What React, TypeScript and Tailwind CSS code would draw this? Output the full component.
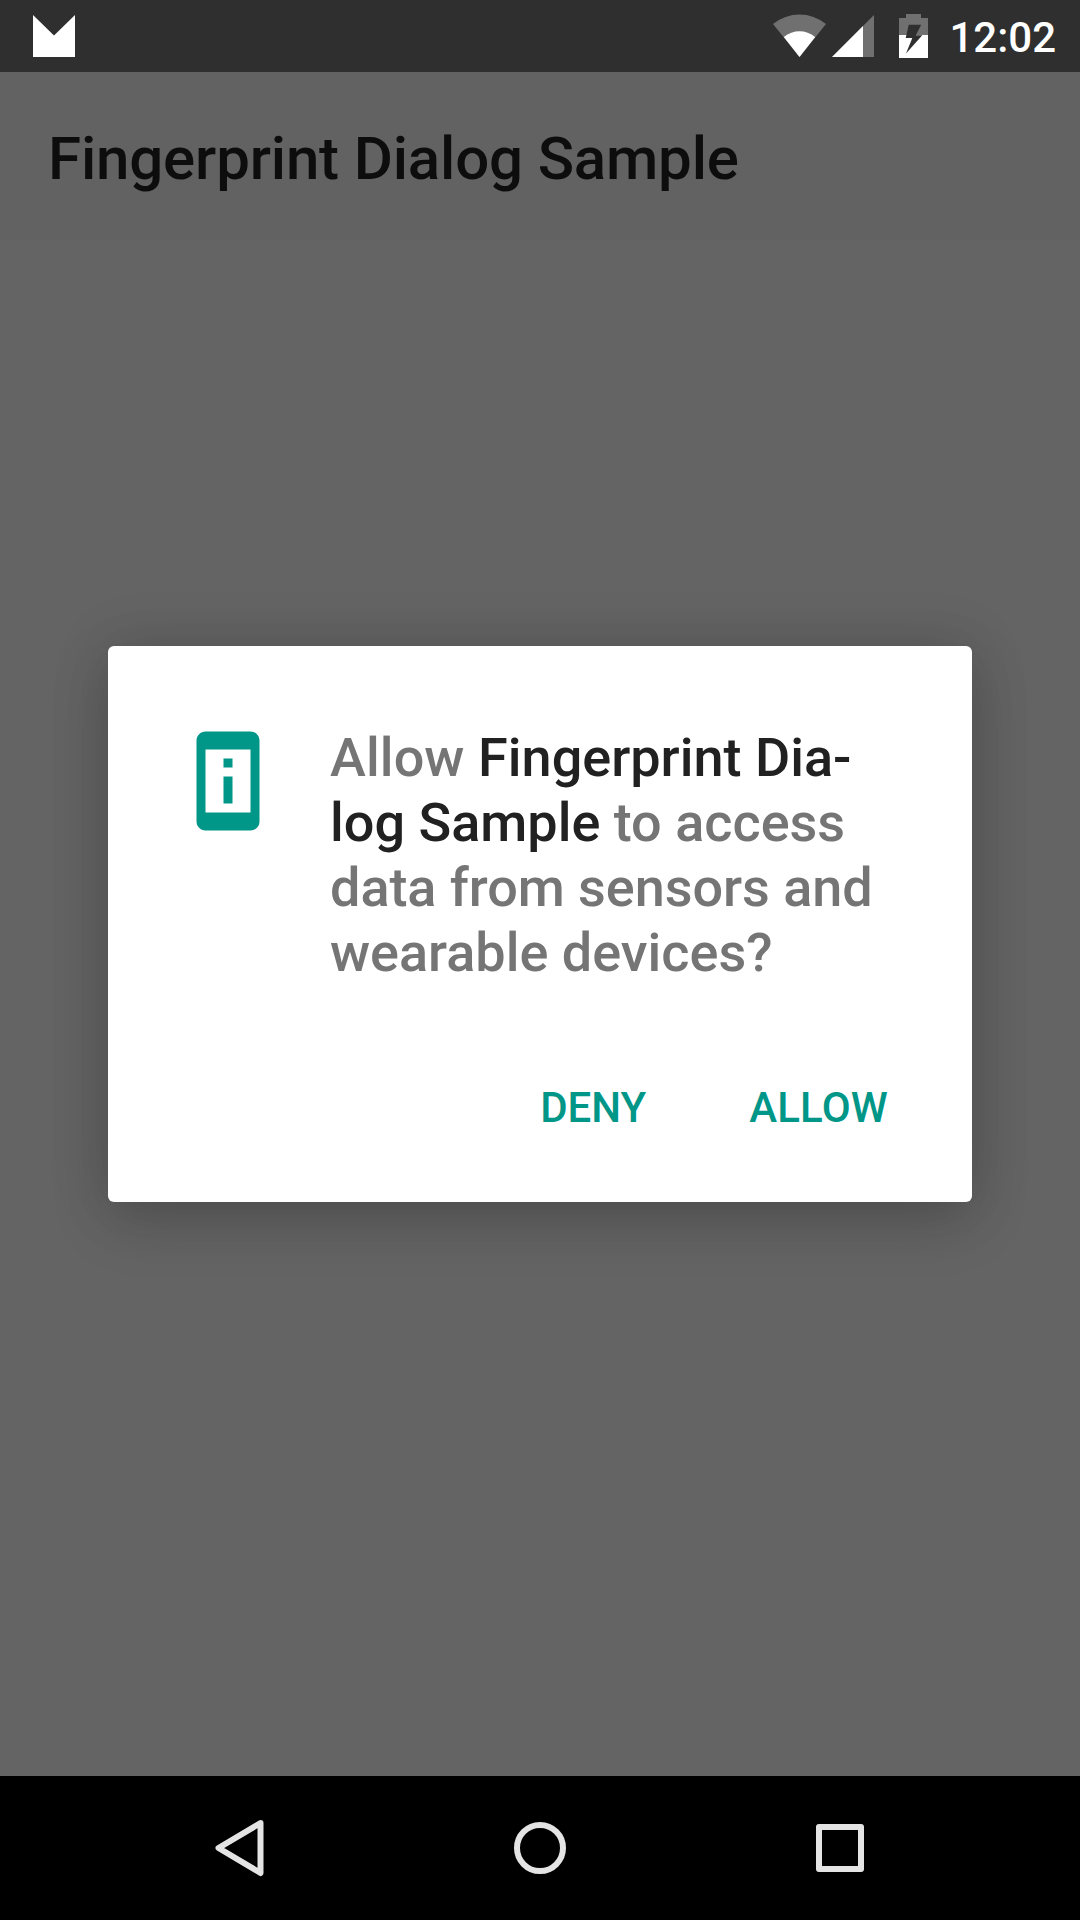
function StatusBar() {
  return (
    <div className="flex h-[72px] shrink-0 items-center justify-between bg-[#2f2f2f] pr-6 pl-[33px]">
      <svg className="h-[42px] w-[42px]" viewBox="0 0 42 42" fill="#fff">
        <path d="M0 0L21 20.5L42 0V42H0Z" />
      </svg>
      <div className="flex items-center">
        <svg className="h-[44px] w-[54px]" viewBox="0 0 54 44">
          <path d="M0 10Q12 0.5 26.5 0.5T53 10L26.5 43Z" fill="#707070" />
          <path d="M10.8 23Q18 17.3 26.5 17.3T42.2 23L26.5 43Z" fill="#fff" />
        </svg>
        <svg className="ml-[5px] h-[42px] w-[42px]" viewBox="0 0 42 42">
          <path d="M0 42L42 0V42Z" fill="#707070" />
          <path d="M0 42L31 11V42Z" fill="#fff" />
        </svg>
        <svg className="ml-[25px] h-[44px] w-[29px]" viewBox="0 0 29 44">
          <path d="M7 0H22V4H29V21H0V4H7Z" fill="#707070" />
          <path d="M0 21H29V44H0Z" fill="#fff" />
          <path d="M9.7 10.7H22.2L16.8 21.3H23.3L7 39.5L13.3 24H6.7Z" fill="#2f2f2f" />
        </svg>
        <span className="ml-[21px] pt-[3px] text-[42px] leading-[48px] font-medium text-white">12:02</span>
      </div>
    </div>
  );
}

function PermissionDialog() {
  return (
    <div
      role="dialog"
      className="flex h-[556px] w-[864px] flex-col rounded-[6px] bg-white pt-[79px] shadow-[0_20px_60px_rgba(0,0,0,0.16),0_0_60px_rgba(0,0,0,0.13)]"
    >
      <div className="flex items-start pl-[66px]">
        <svg className="mt-[2px] h-[108px] w-[108px] shrink-0" viewBox="0 0 24 24" fill="#009688">
          <path d="M13 7h-2v2h2V7zm0 4h-2v6h2v-6zm4-9.99L7 1c-1.1 0-2 .9-2 2v18c0 1.1.9 2 2 2h10c1.1 0 2-.9 2-2V3c0-1.1-.9-1.99-2-1.99zM17 19H7V5h10v14z" />
        </svg>
        <p className="ml-12 text-[54px] leading-[65px] font-medium whitespace-nowrap text-[#757575]">
          <span className="tracking-[0.1px]">Allow </span>
          <span className="text-[#212121]">Fingerprint Dia-</span>
          <br />
          <span className="text-[#212121]">log Sample</span> to access
          <br />
          <span className="tracking-[-0.05px]">data from sensors and</span>
          <br />
          wearable devices?
        </p>
      </div>
      <div className="mt-[95px] flex justify-end gap-[103px] pr-[84px] text-[42px] leading-[56px] font-medium text-[#009688]">
        <button>DENY</button>
        <button className="tracking-[0.2px]">ALLOW</button>
      </div>
    </div>
  );
}

function NavigationBar() {
  return (
    <div className="flex h-36 shrink-0 items-center justify-center gap-[249px] bg-black">
      <svg className="h-[58px] w-[50px]" viewBox="0 0 50 58" fill="none" stroke="#e4e4e4" strokeWidth="6" strokeLinejoin="round">
        <path d="M45.5 4L3.5 29L45.5 54Z" />
      </svg>
      <div className="h-[52px] w-[52px] rounded-full border-6 border-[#e4e4e4]" />
      <svg className="h-12 w-[50px]" viewBox="0 0 50 48" fill="none" stroke="#e4e4e4" strokeWidth="6" strokeLinejoin="round">
        <rect x="4" y="3" width="42" height="42" />
      </svg>
    </div>
  );
}

export default function App() {
  return (
    <div className="relative flex h-[1920px] w-[1080px] flex-col overflow-hidden bg-[#646464] font-['Roboto',sans-serif]">
      <StatusBar />
      <header className="flex h-[168px] shrink-0 items-center bg-[#626262] pt-[5px] pl-12">
        <h1 className="text-[60px] leading-[70px] font-medium tracking-[-0.16px] text-[#0d0d0d]">Fingerprint Dialog Sample</h1>
      </header>
      <main className="flex-1" />
      <NavigationBar />
      <div className="absolute inset-x-0 top-[72px] bottom-36 flex items-center justify-center">
        <PermissionDialog />
      </div>
    </div>
  );
}
